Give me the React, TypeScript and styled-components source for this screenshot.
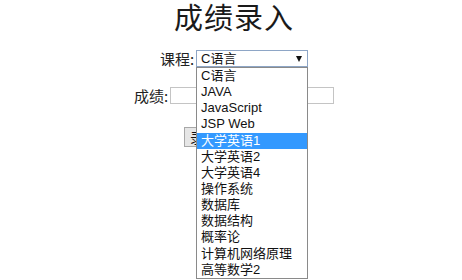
import React from "react";
import styled, { createGlobalStyle } from "styled-components";

const Global = createGlobalStyle`
  html, body { margin: 0; padding: 0; background: #fff; }
  body { font-family: "Liberation Sans", "Noto Sans CJK SC", sans-serif; color: #111; }
`;

const Page = styled.div`
  width: 462px;
  height: 280px;
  box-sizing: border-box;
  padding-left: 6px;
  overflow: hidden;
  display: flex;
  flex-direction: column;
  align-items: center;
`;

const Title = styled.h1`
  margin: 0;
  font-family: "Noto Sans CJK SC", sans-serif;
  font-weight: 400;
  font-size: 29px;
  line-height: 32px;
  letter-spacing: 1px;
  color: #1a1a1a;
`;

const Row = styled.div<{ $top: number }>`
  display: flex;
  align-items: center;
  justify-content: center;
  margin-top: ${(p) => p.$top}px;
  height: 17px;
`;

const Label = styled.label`
  font-family: "Noto Sans CJK SC", sans-serif;
  font-size: 15px;
  line-height: 17px;
  color: #222;
  margin-right: 2px;
`;

const SelectWrap = styled.div`
  position: relative;
  width: 112px;
  height: 17px;
`;

const SelectBox = styled.div`
  box-sizing: border-box;
  width: 112px;
  height: 17px;
  border: 1px solid #8ea6c6;
  display: flex;
  align-items: center;
  justify-content: space-between;
  padding: 0 5px 0 4px;
  font-size: 13px;
  line-height: 15px;
  background: #fff;
`;

const Arrow = styled.span`
  width: 0;
  height: 0;
  border-left: 3.5px solid transparent;
  border-right: 3.5px solid transparent;
  border-top: 6px solid #111;
`;

const List = styled.ul`
  position: absolute;
  top: 17px;
  left: 0;
  width: 112px;
  box-sizing: border-box;
  margin: 0;
  padding: 0;
  list-style: none;
  border: 1px solid #8a8a8a;
  background: #fff;
  z-index: 5;
`;

const Item = styled.li<{ $active?: boolean }>`
  height: 16.15px;
  line-height: 16px;
  padding-left: 4px;
  font-size: 13px;
  white-space: nowrap;
  color: ${(p) => (p.$active ? "#fff" : "#111")};
  background: ${(p) => (p.$active ? "#3399ff" : "transparent")};
`;

const TextInput = styled.input`
  box-sizing: border-box;
  width: 164px;
  height: 17px;
  border: 1px solid #c4c4c4;
  padding: 0 2px;
  font-size: 13px;
  outline: none;
`;

const ButtonRow = styled.div`
  display: flex;
  justify-content: center;
  gap: 20px;
  margin-top: 23px;
`;

const Button = styled.button`
  box-sizing: border-box;
  width: 40px;
  height: 20px;
  padding: 0;
  border: 1px solid #a8a8a8;
  background: #e6e6e6;
  font-family: "Noto Sans CJK SC", sans-serif;
  font-size: 14px;
  line-height: 18px;
  color: #111;
`;

const courses = [
  "C语言",
  "JAVA",
  "JavaScript",
  "JSP Web",
  "大学英语1",
  "大学英语2",
  "大学英语4",
  "操作系统",
  "数据库",
  "数据结构",
  "概率论",
  "计算机网络原理",
  "高等数学2",
];

export default function App() {
  return (
    <>
      <Global />
      <Page>
        <Title>成绩录入</Title>
        <Row $top={18}>
          <Label>课程:</Label>
          <SelectWrap>
            <SelectBox>
              <span>C语言</span>
              <Arrow />
            </SelectBox>
            <List>
              {courses.map((c) => (
                <Item key={c} $active={c === "大学英语1"}>
                  {c}
                </Item>
              ))}
            </List>
          </SelectWrap>
        </Row>
        <Row $top={20}>
          <Label>成绩:</Label>
          <TextInput />
        </Row>
        <ButtonRow>
          <Button>录入</Button>
          <Button>重置</Button>
        </ButtonRow>
      </Page>
    </>
  );
}
